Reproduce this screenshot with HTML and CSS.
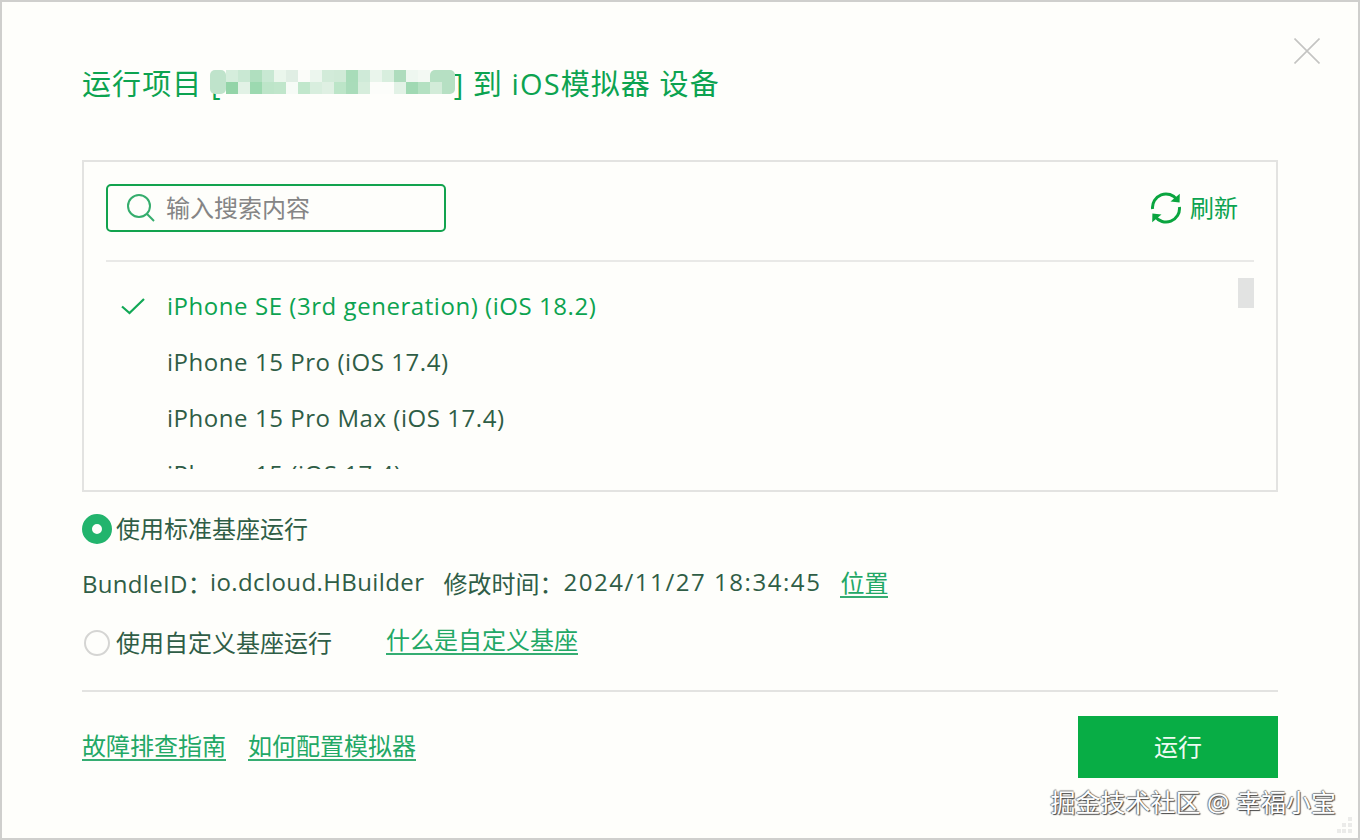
FILE: index.html
```html
<!DOCTYPE html>
<html lang="zh">
<head>
<meta charset="utf-8">
<title>运行项目</title>
<link rel="stylesheet" href="styles.css">
</head>
<body>
<main class="dialog">
  <button class="close" aria-label="关闭">
    <svg width="26" height="26" viewBox="0 0 26 26"><path d="M0.5 0.5 L25.5 25.5 M25.5 0.5 L0.5 25.5" stroke="#c4c4c2" stroke-width="1.6" fill="none"/></svg>
  </button>
  <h1 class="title"><span>运行项目 [</span><svg class="mosaic" width="245" height="24" viewBox="212 73 245 24">
    <rect x="212" y="73" width="16" height="24" rx="5" fill="#bfe3cb"/>
    <rect x="228" y="73" width="12" height="12" fill="#d5eddc"/>
    <rect x="240" y="73" width="12" height="12" fill="#c9e8d3"/>
    <rect x="252" y="73" width="12" height="12" fill="#b0dfbf"/>
    <rect x="264" y="73" width="12" height="12" fill="#c8e8d3"/>
    <rect x="276" y="73" width="12" height="12" fill="#eaf6ec"/>
    <rect x="288" y="73" width="12" height="12" fill="#e0eee4"/>
    <rect x="300" y="73" width="12" height="12" fill="#fbfcf9"/>
    <rect x="312" y="73" width="12" height="12" fill="#ecf6ee"/>
    <rect x="324" y="73" width="12" height="12" fill="#d2ebd9"/>
    <rect x="336" y="73" width="12" height="12" fill="#d0ead7"/>
    <rect x="348" y="73" width="12" height="12" fill="#a8dcb9"/>
    <rect x="360" y="73" width="12" height="12" fill="#cfead8"/>
    <rect x="372" y="73" width="12" height="12" fill="#eaf5ec"/>
    <rect x="384" y="73" width="12" height="12" fill="#d8eede"/>
    <rect x="396" y="73" width="12" height="12" fill="#aedcbd"/>
    <rect x="408" y="73" width="12" height="12" fill="#eef7f0"/>
    <rect x="420" y="73" width="12" height="12" fill="#f3f9f3"/>
    <rect x="432" y="73" width="25" height="24" rx="5" fill="#b6e0c3"/>
    <rect x="228" y="85" width="12" height="12" fill="#93d4a8"/>
    <rect x="240" y="85" width="12" height="12" fill="#e2f2e6"/>
    <rect x="252" y="85" width="12" height="12" fill="#9cd9b0"/>
    <rect x="264" y="85" width="12" height="12" fill="#bde5c9"/>
    <rect x="276" y="85" width="12" height="12" fill="#c0e6cb"/>
    <rect x="288" y="85" width="12" height="12" fill="#f6fbf6"/>
    <rect x="300" y="85" width="12" height="12" fill="#c1e7cc"/>
    <rect x="312" y="85" width="12" height="12" fill="#d8eede"/>
    <rect x="324" y="85" width="12" height="12" fill="#dff0e3"/>
    <rect x="336" y="85" width="12" height="12" fill="#bce5c8"/>
    <rect x="348" y="85" width="12" height="12" fill="#a9dcba"/>
    <rect x="360" y="85" width="12" height="12" fill="#d6eddc"/>
    <rect x="372" y="85" width="24" height="12" fill="#fcfdfa"/>
    <rect x="396" y="85" width="12" height="12" fill="#e2f2e6"/>
    <rect x="408" y="85" width="12" height="12" fill="#a0d9b3"/>
    <rect x="420" y="85" width="12" height="12" fill="#b4e1c2"/>
    <rect x="432" y="85" width="12" height="12" fill="#d3ecd9"/>
  </svg><span>] 到 iOS模拟器 设备</span></h1>

  <section class="panel">
    <div class="toolbar">
      <div class="search">
        <svg class="search-icon" width="28" height="28" viewBox="0 0 28 28"><circle cx="12" cy="12" r="11" stroke="#35ad6d" stroke-width="2" fill="none"/><path d="M19.8 19.8 L27 27" stroke="#35ad6d" stroke-width="2" fill="none"/></svg>
        <span class="placeholder">输入搜索内容</span>
      </div>
      <div class="refresh">
        <svg width="32" height="32" viewBox="0 0 32 32"><g fill="none" stroke="#0aa53f" stroke-width="3"><path d="M2.6 17 A13.5 13.5 0 0 1 27 7.6"/><path d="M29.4 15 A13.5 13.5 0 0 1 5 24.4"/></g><path d="M20.5 9.6 L29.6 10.4 L29.8 1.8 Z" fill="#0aa53f"/><path d="M11.5 22.4 L2.4 21.6 L2.2 30.2 Z" fill="#0aa53f"/></svg>
        <span class="refresh-text">刷新</span>
      </div>
    </div>
    <div class="list">
      <div class="list-inner">
        <div class="item selected">
          <svg class="check" width="26" height="18" viewBox="0 0 26 18"><path d="M2 9.5 L9.5 16 L24 2" stroke="#12a856" stroke-width="2.2" fill="none"/></svg>
          <span>iPhone SE (3rd generation) (iOS 18.2)</span>
        </div>
        <div class="item"><span>iPhone 15 Pro (iOS 17.4)</span></div>
        <div class="item"><span>iPhone 15 Pro Max (iOS 17.4)</span></div>
        <div class="item"><span>iPhone 15 (iOS 17.4)</span></div>
      </div>
      <div class="scrollbar"></div>
    </div>
  </section>

  <div class="option first">
    <span class="radio on"></span><span class="option-text">使用标准基座运行</span>
  </div>
  <div class="meta">
    <span class="meta-row"><span class="bundle-key">BundleID：</span><span class="bundle-value">io.dcloud.HBuilder</span></span>
    <span class="meta-row"><span>修改时间：</span><span class="time-value">2024/11/27 18:34:45</span></span>
    <a class="link">位置</a>
  </div>
  <div class="option second">
    <span class="radio"></span><span class="option-text">使用自定义基座运行</span>
    <a class="link what">什么是自定义基座</a>
  </div>

  <footer class="footer">
    <div class="links"><a class="link">故障排查指南</a><a class="link">如何配置模拟器</a></div>
    <button class="run"><span class="run-text">运行</span></button>
  </footer>
  <div class="watermark">掘金技术社区 @ 幸福小宝</div>
  <svg class="grip" width="16" height="16" viewBox="0 0 16 16"><g fill="#ebebe9"><rect x="11" y="0" width="4" height="4"/><rect x="5" y="6" width="4" height="4"/><rect x="11" y="6" width="4" height="4"/><rect x="0" y="12" width="4" height="4"/><rect x="5" y="12" width="4" height="4"/><rect x="11" y="12" width="4" height="4"/></g></svg>
</main>
</body>
</html>
```
FILE: styles.css
```css
* { box-sizing: border-box; }
html, body { margin: 0; height: 100%; }
body {
  background: #fefefb;
  font-family: "Open Sans", "Noto Sans CJK SC", sans-serif;
  color: #2f5d46;
  overflow: hidden;
}
.dialog {
  position: relative;
  width: 1360px;
  height: 840px;
  border: 2px solid #cfcfcd;
  padding: 0 80px;
  background: #fefefb;
}
.close {
  position: absolute;
  top: 36px;
  right: 38px;
  width: 26px;
  height: 26px;
  padding: 0;
  border: 0;
  background: none;
  line-height: 0;
}
.title {
  display: flex;
  align-items: center;
  height: 40px;
  margin: 60px 0 0;
  font-size: 29px;
  font-weight: 400;
  letter-spacing: 1.1px;
  color: #0ca350;
  white-space: pre;
}
.mosaic {
  flex: none;
  margin: 0 -1px 0 -12px;
  filter: blur(0.6px);
}
.panel {
  height: 332px;
  margin-top: 58px;
  padding: 0 22px;
  border: 2px solid #e3e3e1;
}
.toolbar {
  display: flex;
  align-items: center;
  justify-content: space-between;
  height: 100px;
  padding: 1px 16px 7px 0;
  border-bottom: 2px solid #e9e9e7;
}
.search {
  display: flex;
  align-items: center;
  gap: 11px;
  width: 340px;
  height: 48px;
  padding-left: 19px;
  border: 2px solid #12a34e;
  border-radius: 5px;
}
.placeholder { padding-bottom: 3px; font-size: 24px; color: #858585; }
.refresh {
  display: flex;
  align-items: center;
  gap: 8px;
  font-size: 24px;
  color: #0ca350;
}
.refresh-text { padding-bottom: 4px; }
.list {
  display: flex;
  justify-content: space-between;
  height: 207px;
}
.list-inner { flex: 1; height: 207px; padding-top: 16px; overflow: hidden; }
.item {
  position: relative;
  height: 56px;
  padding-left: 61px;
  font-size: 24px;
  line-height: 56px;
  letter-spacing: 0.55px;
  color: #2f5d46;
  white-space: nowrap;
}
.item.selected { color: #0ca350; }
.check { position: absolute; left: 14px; top: 19px; }
.scrollbar {
  width: 16px;
  height: 30px;
  margin-top: 16px;
  background: #e2e3e2;
}
.option {
  display: flex;
  align-items: center;
  font-size: 24px;
  color: #2f5d46;
  height: 34px;
}
.option-text { padding-bottom: 4px; white-space: nowrap; }
.option.first { margin-top: 20px; gap: 4px; }
.option.second { margin-top: 25px; gap: 6px; }
.radio {
  display: inline-block;
  flex: none;
  width: 30px;
  height: 30px;
  border-radius: 50%;
  border: 2px solid #d5d5d3;
  background: #fefefb;
}
.radio.on {
  border: 10px solid #22b46d;
}
.second .radio { width: 26px; height: 26px; margin-left: 2px; }
.meta {
  display: flex;
  align-items: center;
  gap: 19px;
  height: 34px;
  margin-top: 21px;
  font-size: 24px;
  white-space: nowrap;
}
.meta-row { display: flex; padding-bottom: 4px; }
.bundle-key { width: 128px; letter-spacing: 0.3px; }
.bundle-value { letter-spacing: 0.4px; }
.time-value { letter-spacing: 1.55px; }
.link {
  color: #22a866;
  text-decoration: none;
  border-bottom: 2px solid #35ad72;
  line-height: 26px;
  font-size: 24px;
  white-space: nowrap;
}
.what { margin: 0 0 4px 48px; }
.footer {
  display: flex;
  justify-content: space-between;
  margin-top: 30px;
  height: 118px;
  padding-top: 24px;
  border-top: 2px solid #e3e3e1;
}
.links { display: flex; align-items: flex-start; gap: 22px; padding-top: 17px; }
.run {
  width: 200px;
  height: 62px;
  border: 0;
  padding: 0 0 4px;
  background: #08ad45;
  color: #eefbf2;
  font: inherit;
  font-size: 24px;
}
.watermark {
  position: absolute;
  right: 22px;
  bottom: 19px;
  font-size: 25px;
  color: #fff;
  text-shadow: 1px 1px 1px #444, -1px 0 1px #777, 0 -1px 1px #888;
  white-space: nowrap;
}
.grip {
  position: absolute;
  right: 5px;
  bottom: 5px;
}
```
